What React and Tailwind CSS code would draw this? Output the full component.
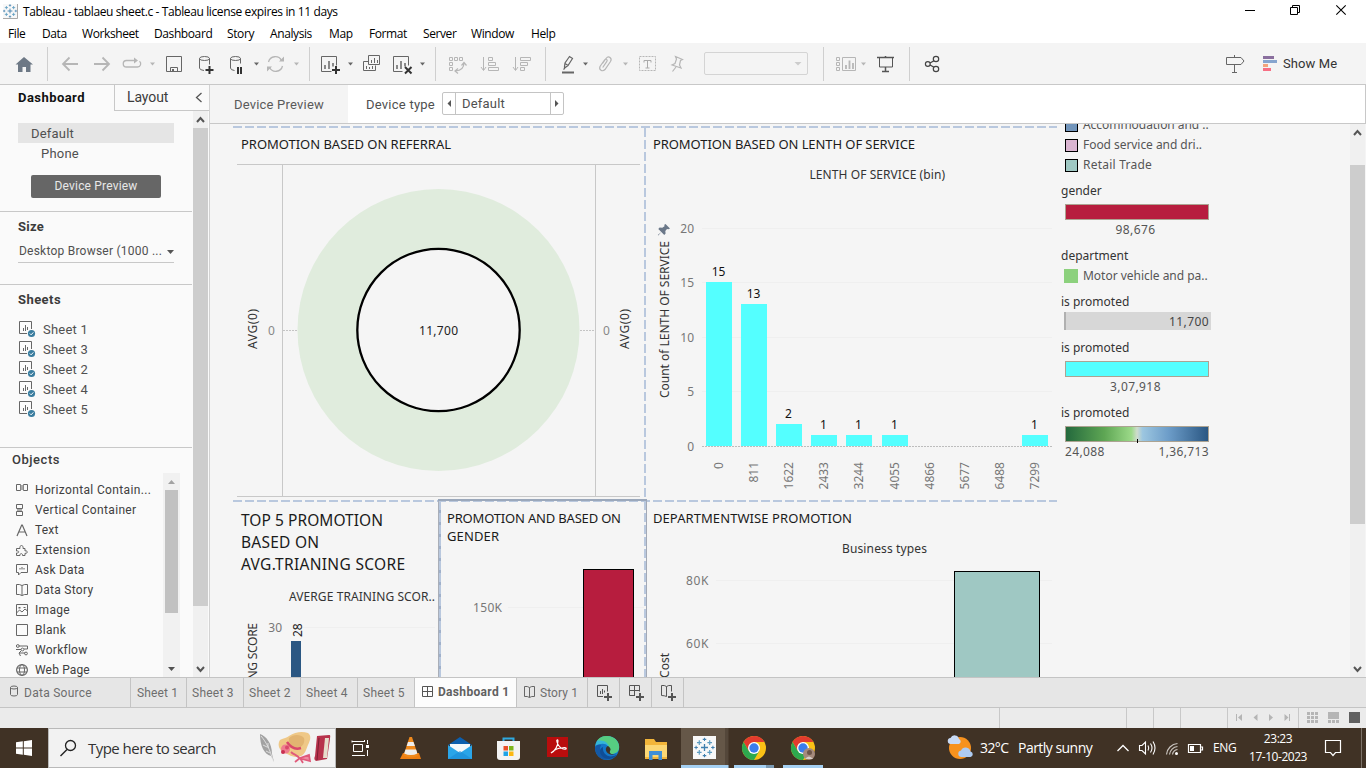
import React from "react";

const WIN = "font-['Open_Sans','Noto_Sans',sans-serif]";
const UI = "font-['Roboto','Noto_Sans',sans-serif]";
const CHART = "font-['Noto_Sans','Open_Sans',sans-serif]";
const DASH_H = "h-[2px] bg-[repeating-linear-gradient(90deg,#b9c8de_0_9px,transparent_9px_12px)]";
const DASH_V = "w-[2px] bg-[repeating-linear-gradient(180deg,#b9c8de_0_9px,transparent_9px_12px)]";

/* Strip of a horizontal bar: x/w is the span it takes, y/h the bar's own range. */
function Slot({ x, w, y, h, className = "", children }) {
  return (
    <svg width={w} height={h} viewBox={`${x} ${y} ${w} ${h}`} className={`shrink-0 ${className}`} fill="none">
      {children}
    </svg>
  );
}

function TableauMark({ cx, cy, s = 1 }) {
  const plus = (x, y, r, c, k) => (
    <path key={`${x},${y}`} d={`M${x - r} ${y}H${x + r}M${x} ${y - r}V${y + r}`} stroke={c} strokeWidth={k} />
  );
  return (
    <g transform={`translate(${cx} ${cy}) scale(${s})`}>
      {plus(0, 0, 2.4, "#3f7fae", 0.9)}
      {plus(-3.6, -3.4, 1.6, "#5b9bc0", 0.8)}
      {plus(3.6, -3.4, 1.6, "#5b9bc0", 0.8)}
      {plus(-3.6, 3.4, 1.6, "#5b9bc0", 0.8)}
      {plus(3.6, 3.4, 1.6, "#5b9bc0", 0.8)}
      {plus(0, -5.6, 1.2, "#3f7fae", 0.7)}
      {plus(0, 5.6, 1.2, "#3f7fae", 0.7)}
      {plus(-5.8, 0, 1.2, "#3f7fae", 0.7)}
      {plus(5.8, 0, 1.2, "#3f7fae", 0.7)}
    </g>
  );
}

function TitleBar() {
  return (
    <div className={`flex h-[24px] items-start bg-white text-black ${WIN}`}>
      <Slot x={0} w={23} y={0} h={24}>
        <rect x="3" y="4" width="15" height="15" fill="#f8f8f8" />
        <path d="M17.5 4V18.5H3" stroke="#a9a9a9" />
        <TableauMark cx={10} cy={11} s={1} />
      </Slot>
      <span className="flex-1 pt-[4px] text-[12px] leading-[16px] tracking-[-0.385px] whitespace-nowrap">
        Tableau - tablaeu sheet.c - Tableau license expires in 11 days
      </span>
      <Slot x={1236} w={130} y={0} h={24}>
        <g stroke="#000" strokeWidth="1">
          <path d="M1245 10.5h10" />
          <path d="M1290.5 7.5h7v7h-7zM1292.5 7.5v-2h7v7h-2" />
          <path d="M1336.300 5.300l9.400 9.400M1345.700 5.300l-9.400 9.400" strokeWidth="1.1" />
        </g>
      </Slot>
    </div>
  );
}

const MENU = [
  ["File", "w-[34px]"], ["Data", "w-[40px]"], ["Worksheet", "w-[72px]"], ["Dashboard", "w-[73px]"],
  ["Story", "w-[43px]"], ["Analysis", "w-[59px]"], ["Map", "w-[40px]"], ["Format", "w-[54px]"],
  ["Server", "w-[48px]"], ["Window", "w-[60px]"], ["Help", "w-[40px]"],
];

function MenuBar() {
  return (
    <div className={`flex h-[19px] bg-white pl-[8px] text-[12px] leading-[20px] tracking-[-0.4px] text-black ${WIN}`}>
      {MENU.map(([t, w]) => (
        <span key={t} className={w}>{t}</span>
      ))}
    </div>
  );
}

const D = "#666";
const G = "#b6b6b6";
const Caret = ({ x, c = D }) => <path d={`M${x - 2.500} 62.500h5l-2.500 3z`} fill={c} />;
const Sep = ({ x }) => <path d={`M${x}.5 47v34`} stroke="#cfcfcf" />;

function Toolbar() {
  const y = 43;
  const h = 41;
  const p = { y, h };
  return (
    <div className={`flex h-[42px] border-b border-[#c8c8c8] bg-[#f4f4f4] ${UI}`}>
      <Slot x={0} w={54} {...p}>
        <path d="M24 57l9 7.500h-2.500v7.500h-4.500v-5h-3.500v5h-4.500v-7.500h-2.500z" fill="#6d7885" />
        <Sep x={47} />
      </Slot>
      <Slot x={54} w={32} {...p}>
        <path d="M78 64H63M69.500 57.500L63 64l6.500 6.500" stroke={G} strokeWidth="1.800" />
      </Slot>
      <Slot x={86} w={32} {...p}>
        <path d="M94 64h15M102.500 57.500L109 64l-6.500 6.500" stroke={G} strokeWidth="1.800" />
      </Slot>
      <Slot x={118} w={42} {...p}>
        <path d="M135.500 60.500h-9a3.200 3.200 0 0 0 0 6.500h11a3.200 3.200 0 0 0 2-5.700" stroke={G} strokeWidth="1.300" />
        <path d="M134 57.500l4 3-4 3z" fill={G} />
        <Caret x={152.500} c={G} />
      </Slot>
      <Slot x={160} w={32} {...p}>
        <path d="M166.500 56.500h15v15h-15zM170.500 71.500v-4h7v4" stroke={D} />
        <path d="M172 69h2v3h-2z" fill={D} />
      </Slot>
      <Slot x={192} w={30} {...p}>
        <path d="M199.500 58.500v9.500q0 2 4.500 2.500M209.500 58.500v6" stroke={D} />
        <ellipse cx="204.500" cy="58.500" rx="5" ry="2" stroke={D} />
        <path d="M205.500 70h8M209.500 66v8" stroke="#333" strokeWidth="2" />
      </Slot>
      <Slot x={222} w={40} {...p}>
        <path d="M230.500 58.500v9.500q0 2 4 2.500M240.500 58.500v5" stroke={D} />
        <ellipse cx="235.500" cy="58.500" rx="5" ry="2" stroke={D} />
        <path d="M238 67v7M241 67v7" stroke="#333" strokeWidth="2" />
        <Caret x={256.500} />
      </Slot>
      <Slot x={262} w={52} {...p}>
        <path d="M268.500 62a7 7 0 0 1 13-1.500M282.500 66a7 7 0 0 1-13 1.500" stroke={G} strokeWidth="1.300" />
        <path d="M279 61.500h5v-5zM272 66.500h-5v5z" fill={G} />
        <Caret x={296.500} c={G} />
        <Sep x={309} />
      </Slot>
      <Slot x={314} w={44} {...p}>
        <path d="M331.500 71.500h-10v-15h15v9" stroke={D} />
        <path d="M325 65v4M329 61v8M333 63v3.500" stroke={D} strokeWidth="1.500" />
        <path d="M332 70h8M336 66v8" stroke="#333" strokeWidth="2" />
        <Caret x={350.500} />
      </Slot>
      <Slot x={358} w={30} {...p}>
        <path d="M368.500 61.500h-5v9h12v-5M368.500 55.500h11v9h-11z" stroke={D} />
        <path d="M366.500 66v3M369.500 67v2M372.500 66v3M371.500 60v3M374.500 58v5M377.500 60v3" stroke={D} />
      </Slot>
      <Slot x={388} w={56} {...p}>
        <path d="M402.500 71.500h-9v-15h15v9" stroke={D} />
        <path d="M397 65v4M401 61v8M405 63v3.500" stroke={D} strokeWidth="1.500" />
        <path d="M405 67l6.500 6.500M411.500 67l-6.500 6.500" stroke="#333" strokeWidth="2" />
        <Caret x={422.500} />
        <Sep x={435} />
      </Slot>
      <Slot x={444} w={30} {...p}>
        <path d="M449.500 57.500h3v3h-3zM454.500 57.500h3v3h-3zM459.500 57.500h3v3h-3zM449.500 62.500h3v3h-3zM449.500 67.500h3v3h-3z" stroke={G} />
        <path d="M464 62.500q0 8-8.500 8.500M461.500 65.500l2.500-3 2.500 3M458 68.500l-3 2.500 3 2.500" stroke={G} strokeWidth="1.200" />
      </Slot>
      <Slot x={474} w={32} {...p}>
        <path d="M483.500 57v13M481 67l2.500 3.500 2.500-3.500M488.500 57.500h4v3h-4zM488.500 62.500h7v3h-7zM488.500 67.500h10v3h-10z" stroke={G} />
      </Slot>
      <Slot x={506} w={46} {...p}>
        <path d="M515.500 57v13M513 67l2.500 3.500 2.500-3.500M520.500 57.500h10v3h-10zM520.500 62.500h7v3h-7zM520.500 67.500h4v3h-4z" stroke={G} />
        <Sep x={545} />
      </Slot>
      <Slot x={552} w={42} {...p}>
        <path d="M564.500 66.500l.5-3.500 4.500-6.500 3 2-4.500 7-3.500 2.500zM565 63.500l3 2M563.500 69.500l1.500-1.500" stroke={D} strokeWidth="1.200" />
        <path d="M562 72.500h12" stroke={D} strokeWidth="2" />
        <Caret x={585.500} />
      </Slot>
      <Slot x={594} w={40} {...p}>
        <path d="M602.500 63.500l3.500-5q2-2.500 4-1t.500 4l-5.500 8q-2 2-4 .8t-1-3.800l4.500-6.500q1.200-1.500 2.200-.6t0 2.300l-4 5.800" stroke={G} strokeWidth="1.200" />
        <Caret x={625.500} c={G} />
      </Slot>
      <Slot x={634} w={30} {...p}>
        <rect x="639.500" y="56.500" width="16" height="14" stroke={G} strokeDasharray="2 1" />
        <path d="M644 62.500v-2h7v2M647.500 60.500v7.500M645.500 68h4" stroke="#aaa" />
      </Slot>
      <Slot x={664} w={40} {...p}>
        <path d="M675.500 56.500l7 3-2 1-1 4.500 1.500 3-9-3 3-1.500 1.500-4.500zM676 67l-3.500 4.500" stroke={G} strokeWidth="1.200" />
      </Slot>
      <div className="mt-[9px] flex h-[23px] w-[104px] shrink-0 items-center justify-end rounded-[2px] border border-[#d4d4d4] pr-[5px]">
        <svg width="8" height="5"><path d="M0.500 1h7l-3.500 3.500z" fill="#ccc" /></svg>
      </div>
      <Slot x={808} w={64} {...p}>
        <Sep x={823} />
        <path d="M836.500 57.500h3v3h-3zM836.500 62.500h3v3h-3zM836.500 67.500h3v3h-3zM842.500 57.500h13v13h-13z" stroke={G} />
        <path d="M846 65v4M849.500 60.500v8.500M853 63v6" stroke={G} strokeWidth="1.800" />
        <Caret x={863.500} c={G} />
      </Slot>
      <Slot x={872} w={44} {...p}>
        <path d="M877 57.500h17M885.500 56v2M885.500 67v5M882 71.500h7" stroke="#555" strokeWidth="1.500" />
        <path d="M879.500 58v9h13v-9" stroke="#555" />
        <Sep x={909} />
      </Slot>
      <Slot x={916} w={34} {...p}>
        <path d="M930 63l4-2.300M930 65l4 2.300" stroke="#444" strokeWidth="1.300" />
        <circle cx="927.800" cy="64" r="2.400" stroke="#444" strokeWidth="1.200" />
        <circle cx="936" cy="59" r="2.700" stroke="#444" strokeWidth="1.200" />
        <circle cx="936" cy="69" r="2.700" stroke="#444" strokeWidth="1.200" />
      </Slot>
      <div className="flex-1" />
      <Slot x={1220} w={63} {...p}>
        <path d="M1226.500 57.500h14.500l3 3.500-3 3.500h-14.500zM1234.500 55v2.500M1234.500 64.500v8M1232 72.500h5" stroke={D} />
        <path d="M1263 56h11v3h-11z" fill="#8a6f9e" />
        <path d="M1263 60h14v3h-14z" fill="#86a5cf" />
        <path d="M1263 64h5v3h-5z" fill="#f2a47c" />
        <path d="M1263 68h8v3h-8z" fill="#f76f84" />
      </Slot>
      <span className="w-[83px] text-[13px] leading-[41px] tracking-[0.100px] text-[#333]">Show Me</span>
    </div>
  );
}

function SheetIcon() {
  return (
    <svg width="17" height="17" viewBox="0 0 17 17" fill="none" className="shrink-0">
      <path d="M8 12.500H0.500v-12h12V8" stroke="#666" />
      <path d="M4.500 7v3M6.500 4v6M8.500 6v3" stroke="#666" />
      <circle cx="12.500" cy="12.500" r="3.600" fill="#3a7d9f" />
      <path d="M10.800 12.500l1.300 1.300 2.200-2.400" stroke="#fff" />
    </svg>
  );
}

const OBJ = [
  ["Horizontal Contain...", "tracking-[0.350px]", <><path d="M.5.500h4v6h-4zM7.500.500h4v6h-4z" stroke="#666" /><path d="M4.500 1h3v5h-3z" fill="#aaa" /></>],
  ["Vertical Container", "tracking-[0.340px]", <><path d="M.5.500h6v4h-6zM.5 7.500h6v4h-6z" stroke="#666" /><path d="M1 5h5v2H1z" fill="#aaa" /></>],
  ["Text", "tracking-[0.200px]", <path d="M1 12L5.700 1h.6L11 12M3 8h6" stroke="#666" strokeWidth="1.200" />],
  ["Extension", "tracking-[0.350px]", <path d="M.5 4.500H4C3 .5 8 .5 7 4.500h2V7c3-1 3 3 0 2.300v2.200H6.500c.5-2.500-3-2.500-2.500 0H.5V9c3 .3 3-2.500 0-2z" stroke="#666" />],
  ["Ask Data", "tracking-[0.200px]", <><path d="M.5.500h11v8H5L2.500 11V8.500h-2z" stroke="#666" /><path d="M3 4h2V3h2v1h2v1.500H3z" fill="#aaa" /></>],
  ["Data Story", "tracking-[0.300px]", <path d="M.5.500q3-.5 5.500 1 2.500-1.500 5.500-1v10q-3-.5-5.500 1-2.500-1.500-5.500-1zM6 1.500v10" stroke="#666" />],
  ["Image", "tracking-[0.300px]", <><path d="M.5.500h11v11H.5zM.5 9l3-3 2.500 2 3-3 2.500 2" stroke="#666" /><path d="M2.500 3h2v1.500h-2zM7.500 3h2v1h-2z" fill="#666" /></>],
  ["Blank", "tracking-[0.300px]", <path d="M.5.500h11v11H.5z" stroke="#666" />],
  ["Workflow", "tracking-[0.250px]", <><path d="M3 2h8.500v3H8M0 5.500h5M3 9h6M5 7l-2 2 1.500 3" stroke="#666" /><circle cx="1.800" cy="2" r="1.400" stroke="#666" /><circle cx="6.500" cy="5.500" r="1.400" stroke="#666" /><circle cx="10" cy="9.500" r="1.400" stroke="#666" /></>],
  ["Web Page", "tracking-[0.150px]", <><circle cx="6" cy="6" r="5.400" stroke="#666" strokeWidth="1.200" /><ellipse cx="6" cy="6" rx="2.500" ry="5.400" stroke="#666" /><path d="M1 4h10M1 8h10" stroke="#666" /></>],
];

function SidePanel() {
  return (
    <div className={`flex h-full w-[210px] shrink-0 flex-col border-r border-[#d2d2d2] bg-[#fafafa] text-[#505050] ${UI}`}>
      <div className="flex h-[26px] shrink-0">
        <div className="w-[114px] pl-[18px] text-[13px] leading-[25px] font-bold tracking-[0.450px] text-[#111]">Dashboard</div>
        <div className="flex flex-1 items-center border-b border-l border-[#c8c8c8] pl-[12px]">
          <span className="w-[68px] text-[14px] leading-[25px] tracking-[-0.100px] text-[#3c3c3c]">Layout</span>
          <svg width="8" height="11" fill="none"><path d="M6.500 1L1.500 5.500l5 4.500" stroke="#555" strokeWidth="1.300" /></svg>
        </div>
      </div>
      <div className="flex min-h-0 flex-1">
        <div className="mr-px flex w-[192px] shrink-0 flex-col overflow-hidden">
          <div className="h-[101px] shrink-0 border-b border-[#c8c8c8] pt-[12px] pl-[18px]">
            <div className="h-[20px] w-[156px] bg-[#e5e5e5] pl-[13px] text-[13px] leading-[21px] tracking-[0.200px]">Default</div>
            <div className="h-[20px] pl-[23px] text-[13px] leading-[22px] tracking-[0.200px]">Phone</div>
            <div className="mt-[12px] ml-[13px] h-[23px] w-[130px] rounded-[2px] bg-[#666] text-center text-[12px] leading-[22px] tracking-[0.180px] text-[#e8e8e8]">
              Device Preview
            </div>
          </div>
          <div className="h-[73px] shrink-0 border-b border-[#c8c8c8] pt-[4px] pl-[18px]">
            <div className="h-[22px] text-[13px] leading-[22px] font-bold tracking-[0.260px] text-[#3c3c3c]">Size</div>
            <div className="mt-[3px] flex h-[22px] w-[156px] items-center justify-between border-b border-[#c8c8c8] pl-px text-[12px] leading-[20px] tracking-[0.230px] whitespace-nowrap">
              <span className="pb-px">Desktop Browser (1000 ...</span>
              <svg width="7" height="4"><path d="M0 0h7L3.500 4z" fill="#555" /></svg>
            </div>
          </div>
          <div className="h-[163px] shrink-0 border-b border-[#c8c8c8] pt-[4px] pl-[18px]">
            <div className="mb-[8px] h-[22px] text-[13px] leading-[22px] font-bold tracking-[0.430px] text-[#3c3c3c]">Sheets</div>
            {[1, 3, 2, 4, 5].map((n) => (
              <div key={n} className="flex h-[20px] items-center gap-[7px] pl-px text-[13px] tracking-[0.220px]">
                <SheetIcon />
                <span className="pt-[2px]">Sheet {n}</span>
              </div>
            ))}
          </div>
          <div className="flex min-h-0 flex-1 flex-col pl-[12px]">
            <div className="h-[25px] shrink-0 text-[13px] leading-[23px] font-medium tracking-[0.530px] text-[#3c3c3c]">Objects</div>
            <div className="flex min-h-0 flex-1">
              <div className="w-[151px] overflow-hidden pt-[7px] pl-[4px]">
                {OBJ.map(([t, k, ic]) => (
                  <div key={t} className={`flex h-[20px] items-center gap-[7px] text-[12px] whitespace-nowrap text-[#404040] ${k}`}>
                    <svg width="12" height="12" viewBox="0 0 12 12" fill="none" className="shrink-0 overflow-visible">{ic}</svg>
                    {t}
                  </div>
                ))}
              </div>
              <div className="flex w-[17px] flex-col items-center bg-[#f1f1f1]">
                <svg width="7" height="4" className="mt-[7px] mb-[6px] shrink-0"><path d="M0 4h7L3.500 0z" fill="#a3a3a3" /></svg>
                <div className="h-[123px] w-[13px] shrink-0 bg-[#c1c1c1]" />
                <div className="flex-1" />
                <svg width="7" height="4" className="mb-[6px] shrink-0"><path d="M0 0h7L3.500 4z" fill="#505050" /></svg>
              </div>
            </div>
          </div>
        </div>
        <div className="flex w-[15px] flex-col items-center bg-[#f0f0f0]">
          <svg width="15" height="17" fill="none"><path d="M4 11l3.500-4 3.500 4" stroke="#555" strokeWidth="2" /></svg>
          <div className="h-[478px] w-full bg-[#cdcdcd]" />
          <div className="flex-1" />
          <svg width="15" height="17" fill="none"><path d="M4 7l3.500 4L11 7" stroke="#555" strokeWidth="2" /></svg>
        </div>
      </div>
    </div>
  );
}

function DeviceBar() {
  return (
    <div className={`flex h-[39px] shrink-0 border-b border-[#c8c8c8] bg-white text-[13px] leading-[39px] text-[#505050] ${UI}`}>
      <div className="w-[138px] bg-[#f4f4f4] pl-[24px] tracking-[0.200px] text-[#5a5a5a]">Device Preview</div>
      <div className="w-[94px] pl-[18px] tracking-[0.240px]">Device type</div>
      <div className="mt-[7px] flex h-[23px] w-[122px] items-center rounded-[2px] border border-[#c4c4c4]">
        <svg width="12" height="21"><path d="M8 7v7l-3.500-3.500z" fill="#555" /></svg>
        <div className="h-full flex-1 border-x border-[#c4c4c4] pl-[6px] leading-[21px] tracking-[0.200px]">Default</div>
        <svg width="12" height="21"><path d="M4 7v7l3.500-3.500z" fill="#555" /></svg>
      </div>
      <div className="flex-1" />
      <div className="w-px bg-[#c8c8c8]" />
    </div>
  );
}

function Txt({ x, y, w, c = "#333", s = 12, a, children }) {
  return (
    <text x={x} y={y} fontSize={s} fill={c} textAnchor={a} textLength={w} lengthAdjust="spacing">{children}</text>
  );
}
function VTxt({ x, y, w, c = "#333", s = 12, a, children }) {
  return (
    <text transform={`translate(${x} ${y}) rotate(-90)`} fontSize={s} fill={c} textAnchor={a} textLength={w}>{children}</text>
  );
}

/* A worksheet on the dashboard; its viewBox is in window coordinates. */
function Sheet({ x, y, w, h, children }) {
  return (
    <svg width={w} height={h} viewBox={`${x} ${y} ${w} ${h}`} className={`shrink-0 ${CHART}`} fill="none">
      {children}
    </svg>
  );
}

function ReferralChart() {
  return (
    <Sheet x={233} y={128} w={411} h={372}>
      <Txt x={241} y={149} s={13} w={210} c="#1b1b1b">PROMOTION BASED ON REFERRAL</Txt>
      <path d="M237 164.500h403M237 496.500h403M282.500 164v332M595.500 164v332" stroke="#c8c8c8" />
      <path d="M283 330.500h312" stroke="#c4c4c4" strokeDasharray="2 1" />
      <circle cx="438.500" cy="330" r="141" fill="#e0ecdd" />
      <circle cx="438.500" cy="330" r="81.200" fill="#f5f5f5" stroke="#000" strokeWidth="2.300" />
      <Txt x={438.5} y={335} w={39} a="middle" c="#222">11,700</Txt>
      <Txt x={268} y={335} c="#888">0</Txt>
      <Txt x={603} y={335} c="#888">0</Txt>
      <VTxt x={257} y={349} w={40}>AVG(0)</VTxt>
      <VTxt x={629} y={349} w={40}>AVG(0)</VTxt>
    </Sheet>
  );
}

const BINS = [
  [706, 282, "0", "15"], [741, 304, "811", "13"], [776, 424, "1622", "2"], [811, 435, "2433", "1"], [846, 435, "3244", "1"],
  [882, 435, "4055", "1"], [917, 446, "4866"], [952, 446, "5677"], [987, 446, "6488"], [1022, 435, "7299", "1"],
];

function ServiceChart() {
  return (
    <Sheet x={646} y={128} w={411} h={372}>
      <Txt x={653} y={149} s={13} w={262} c="#1b1b1b">PROMOTION BASED ON LENTH OF SERVICE</Txt>
      <Txt x={809.5} y={179} w={135.5}>LENTH OF SERVICE (bin)</Txt>
      <path d="M702 228.500h350M702 282.500h350M702 337.500h350M702 391.500h350" stroke="#efefef" />
      {[["20", 233], ["15", 287], ["10", 342], ["5", 396], ["0", 451]].map(([t, y]) => (
        <Txt key={t} x={694} y={y} a="end" c="#777">{t}</Txt>
      ))}
      {BINS.map(([x, y, bin, n]) => (
        <g key={bin}>
          <rect x={x} y={y} width="26" height={446 - y} fill="#54ffff" />
          {n && <Txt x={x + 12.5} y={y - 6} a="middle" c="#111">{n}</Txt>}
          <VTxt x={x + 16.5} y={462} a="end" c="#777">{bin}</VTxt>
        </g>
      ))}
      <path d="M702 446.500h350" stroke="#bdbdbd" strokeDasharray="2 1" />
      <VTxt x={669} y={398} w={157}>Count of LENTH OF SERVICE</VTxt>
      <path d="M665.500 224l4.500 4.500-1.500.8-1.500-.3-1.700 2 .3 2.500-1.300 1.500-3-3-3 3.500-.5-.5 3.500-3-3-3 1.300-1.500 2.700.3 2.200-1.500-.2-1.500z" fill="#6b7889" />
    </Sheet>
  );
}

function TrainingChart() {
  return (
    <Sheet x={233} y={502} w={205} h={175}>
      <Txt x={241} y={526} s={15.5} w={142} c="#1b1b1b">TOP 5 PROMOTION</Txt>
      <Txt x={241} y={548} s={15.5} w={78} c="#1b1b1b">BASED ON</Txt>
      <Txt x={241} y={570} s={15.5} w={164} c="#1b1b1b">AVG.TRIANING SCORE</Txt>
      <Txt x={289} y={601} w={146}>AVERGE TRAINING SCOR..</Txt>
      <path d="M303 627.500h132" stroke="#efefef" />
      <Txt x={282} y={632} a="end" c="#777">30</Txt>
      <rect x="291" y="641" width="10" height="36" fill="#2b5783" />
      <VTxt x={301.5} y={637} c="#222">28</VTxt>
      <VTxt x={257} y={623} w={139} a="end">AVERGE TRAINING SCORE</VTxt>
    </Sheet>
  );
}

function GenderChart() {
  return (
    <div className="flex h-[178px] w-[209px] shrink-0 flex-col border-t-2 border-[#9ba8bb]">
      <div className="flex">
        <div className="h-[176px] w-px bg-[#a9aeb8]" />
        <div className={`h-[176px] bg-[#9fb0ca] ${DASH_V}`} />
        <Sheet x={441} y={501} w={203} h={176}>
          <Txt x={447} y={523} s={13} w={174} c="#1b1b1b">PROMOTION AND BASED ON</Txt>
          <Txt x={447} y={541} s={13} w={52} c="#1b1b1b">GENDER</Txt>
          <path d="M508 607.500h136" stroke="#efefef" />
          <Txt x={473} y={612} w={29} c="#777">150K</Txt>
          <rect x="583.500" y="569.500" width="50" height="120" fill="#b71d3e" stroke="#000" />
        </Sheet>
        <div className={`h-[176px] ${DASH_V}`} />
        <div className="h-[176px] w-px bg-[#a3a9b5]" />
      </div>
    </div>
  );
}

function DepartmentChart() {
  return (
    <Sheet x={647} y={502} w={410} h={175}>
      <Txt x={653} y={523} s={13} w={199} c="#1b1b1b">DEPARTMENTWISE PROMOTION</Txt>
      <Txt x={842} y={553} w={85}>Business types</Txt>
      <path d="M716 580.500h336M716 643.500h336" stroke="#efefef" />
      <Txt x={686} y={585} w={22.5} c="#777">80K</Txt>
      <Txt x={686} y={648} w={22.5} c="#777">60K</Txt>
      <rect x="954.500" y="571.500" width="85" height="120" fill="#9fc8c3" stroke="#000" />
      <VTxt x={669} y={653} a="end">Average of Training Cost</VTxt>
    </Sheet>
  );
}

const Swatch = ({ c }) => <span className={`mr-[5px] ml-[4px] h-[13px] w-[13px] border border-black ${c}`} />;
const Head = ({ c = "", children }) => <div className={`h-[18px] leading-[18px] text-[#333] ${c}`}>{children}</div>;

function Legends() {
  return (
    <div className={`flex w-[293px] flex-col pl-[4px] text-[12px] text-[#555] ${CHART}`}>
      <div className="-mt-[9px] flex h-[20px] items-center tracking-[-0.050px]"><Swatch c="bg-[#7295bb]" />Accommodation and ..</div>
      <div className="flex h-[20px] items-center tracking-[-0.050px]"><Swatch c="bg-[#dab5d1]" />Food service and dri..</div>
      <div className="flex h-[20px] items-center tracking-[0.230px]"><Swatch c="bg-[#9fc8c3]" />Retail Trade</div>
      <Head c="mt-[7px]">gender</Head>
      <div className="mt-[4px] ml-[4px] h-[16px] w-[144px] border border-[#aca392] bg-[#b71d3e]" />
      <div className="ml-[4px] h-[20px] w-[141px] text-center leading-[20px] tracking-[0.400px]">98,676</div>
      <Head c="mt-[7px]">department</Head>
      <div className="mt-[1px] flex h-[20px] items-center tracking-[-0.020px]"><span className="mr-[5px] ml-[3px] size-[14px] bg-[#8cd17d]" />Motor vehicle and pa..</div>
      <Head c="mt-[7px]">is promoted</Head>
      <div className="mt-[1px] ml-[3px] h-[18px] w-[147px] border-l-2 border-[#b0b0b0] bg-[#d7d7d7] pr-[2px] text-right leading-[19px] tracking-[0.400px] text-[#444]">11,700</div>
      <Head c="mt-[9px]">is promoted</Head>
      <div className="mt-[4px] ml-[4px] h-[16px] w-[144px] border border-[#aca392] bg-[#54ffff]" />
      <div className="ml-[4px] h-[20px] w-[141px] text-center leading-[20px] tracking-[0.400px]">3,07,918</div>
      <Head c="mt-[7px]">is promoted</Head>
      <div className="mt-[4px] ml-[4px] flex h-[16px] w-[144px] items-end justify-center border border-[#aca392] bg-[linear-gradient(90deg,#24693d_0%,#5ea654_27%,#9bd988_46%,#cfdccc_50%,#9cc6e0_54%,#6d9dc9_72%,#2a5783_100%)]">
        <span className="-mb-[2px] ml-px h-[4px] w-px bg-black" />
      </div>
      <div className="ml-[4px] flex h-[20px] w-[144px] justify-between leading-[19px] tracking-[0.350px]"><span>24,088</span><span>1,36,713</span></div>
    </div>
  );
}

function Canvas() {
  return (
    <div className="flex h-[553px] overflow-hidden bg-[#f5f5f5]">
      <div className="ml-[23px] flex w-[824px] shrink-0 flex-col pt-[2px]">
        <div className={DASH_H} />
        <div className="flex h-[372px]">
          <ReferralChart />
          <div className={`h-[372px] ${DASH_V}`} />
          <ServiceChart />
        </div>
        <div className={DASH_H} />
        <div className="flex h-[175px] items-end">
          <TrainingChart />
          <GenderChart />
          <DepartmentChart />
        </div>
      </div>
      <Legends />
      <div className="flex w-[15px] shrink-0 flex-col bg-[#f0f0f0]">
        <svg width="15" height="17" fill="none"><path d="M4 11l3.500-4 3.500 4" stroke="#555" strokeWidth="2" /></svg>
        <div className="mt-[24px] h-[359px] bg-[#cdcdcd]" />
        <div className="flex-1" />
        <svg width="15" height="17" fill="none"><path d="M4 7l3.500 4L11 7" stroke="#555" strokeWidth="2" /></svg>
      </div>
    </div>
  );
}

const Plus = () => <path d="M7 12h8M11 8v8" stroke="#555" strokeWidth="2" />;
const TAB = "flex h-full items-center border-r border-[#c4c4c4]";

function SheetTabs() {
  return (
    <div className={`flex h-[31px] border-y border-[#c4c4c4] bg-[#e6e6e6] text-[12px] whitespace-nowrap text-[#6e6e6e] ${UI}`}>
      <div className={`${TAB} w-[131px] gap-[6px] pl-[10px] tracking-[0.270px]`}>
        <svg width="8" height="12" fill="none" className="mb-[3px]"><path d="M.5 2.500v7q0 1.500 3.500 1.500t3.500-1.500v-7M.5 2.500q0 1.500 3.500 1.500T7.500 2.500 4 1 .5 2.500z" stroke="#666" /></svg>
        Data Source
      </div>
      <div className={`${TAB} w-[56px] pl-[6px] tracking-[0.130px]`}>Sheet 1</div>
      <div className={`${TAB} w-[57px] pl-[5px] tracking-[0.250px]`}>Sheet 3</div>
      <div className={`${TAB} w-[57px] pl-[5px] tracking-[0.250px]`}>Sheet 2</div>
      <div className={`${TAB} w-[57px] pl-[5px] tracking-[0.250px]`}>Sheet 4</div>
      <div className={`${TAB} w-[57px] pl-[5px] tracking-[0.250px]`}>Sheet 5</div>
      <div className={`${TAB} w-[102px] gap-[5px] bg-[#fcfcfc] pl-[7px] pb-[2px] font-bold tracking-[0.320px] text-[#606060]`}>
        <svg width="11" height="11" fill="none"><path d="M.5.500h10v10H.5zM5.500.500v10M.5 5.500h10" stroke="#555" /></svg>
        Dashboard 1
      </div>
      <div className={`${TAB} w-[71px] gap-[4px] pl-[7px] tracking-[0.090px]`}>
        <svg width="12" height="13" fill="none"><path d="M.5.500q3-.5 5 1 2-1.500 5-1v10q-3-.5-5 1-2-1.500-5-1zM5.500 1.500v10" stroke="#666" /></svg>
        Story 1
      </div>
      <div className={`${TAB} w-[32px] pt-px pl-[9px]`}>
        <svg width="17" height="17" fill="none"><path d="M6 11.500H.5v-11h10v6M3.500 6v3M5.500 4v5M7.500 5.500v2" stroke="#555" /><Plus /></svg>
      </div>
      <div className={`${TAB} w-[32px] pt-px pl-[9px]`}>
        <svg width="17" height="17" fill="none"><path d="M6 10.500H.5V.500h10v6M5.500.500v10M.5 5.500h10" stroke="#555" /><Plus /></svg>
      </div>
      <div className={`${TAB} w-[32px] pt-px pl-[9px]`}>
        <svg width="17" height="17" fill="none"><path d="M5.500 11.500q-2-1-5-1V.500q3-.5 5 1 2-1.500 5-1v6M5.500 1.500v10" stroke="#555" /><Plus /></svg>
      </div>
    </div>
  );
}

function StatusBar() {
  return (
    <div className="flex h-[20px] justify-end bg-[#ebebeb]">
      <Slot x={996} w={370} y={708} h={20}>
        <path d="M999.500 708v20M1126.500 708v20M1153.500 708v20M1180.500 708v20M1227.500 708v20M1298.500 708v20" stroke="#c8c8c8" />
        <path d="M1236.500 714v7M1289.500 714v7" stroke="#b5b5b5" />
        <path d="M1242 714v7l-4-3.500zM1257.500 714v7l-4-3.500zM1269 714v7l4-3.500zM1284.500 714v7l4-3.500z" fill="#b5b5b5" />
        {[1307, 1311, 1315].map((x) => [712, 716, 720].map((y) => <rect key={`${x}-${y}`} x={x} y={y} width="3" height="3" fill="#b5b5b5" />))}
        <path d="M1328 712h11v7h-11zM1328 720h3v3h-3zM1332 720h3v3h-3zM1336 720h3v3h-3z" fill="#b5b5b5" />
        <rect x="1349" y="712" width="11" height="11" fill="#606060" />
      </Slot>
    </div>
  );
}

function Chrome({ cx, cy }) {
  return (
    <g transform={`translate(${cx} ${cy})`}>
      <circle r="12" fill="#fbc116" />
      <path d="M0-6h10.400A12 12 0 0 0-10.400-6L-5.200 3z" fill="#e33b2e" />
      <path d="M-10.400-6A12 12 0 0 0 0 12L5.200 3-5.200 3z" fill="#2da94f" />
      <circle r="6" fill="#fff" />
      <circle r="4.700" fill="#3b7ded" />
    </g>
  );
}

function Taskbar() {
  const p = { y: 728, h: 40 };
  return (
    <div className={`flex h-[40px] bg-[#403225] text-white ${WIN}`}>
      <Slot x={0} w={48} {...p}>
        <path d="M16 742.300l6.800-1v6.300H16zM23.800 741.200l8.200-1.200v7.600h-8.200zM16 748.500h6.800v6.300l-6.800-1zM23.800 748.500H32v7.500l-8.200-1.200z" fill="#fff" />
      </Slot>
      <div className="flex w-[288px] shrink-0 border border-[#b9b9b9] bg-[#f2f2f2]">
        <Slot x={49} w={39} y={729} h={38}>
          <circle cx="70.500" cy="745.500" r="5" stroke="#222" strokeWidth="1.300" />
          <path d="M67 749.500l-6.500 6.500" stroke="#222" strokeWidth="1.400" />
        </Slot>
        <span className="w-[169px] text-[15px] leading-[38px] tracking-[-0.530px] text-[#333]">Type here to search</span>
        <Slot x={257} w={78} y={729} h={38}>
          <path d="M260 734c6 2 12 9 12 20l2 8-3-6c-7-2-11-10-11-22z" fill="#a2a2a2" />
          <path d="M261 736c5 6 9 13 12 25M263 745l4 2M266 751l4 2M268 743l0 5" stroke="#ececec" strokeWidth=".8" />
          <path d="M279 742c1-4 6-3 10-6 6-4 13-5 19-3 4 3 2 8 0 12-2 5-3 9-7 11-8 3-13-2-19-5-3-2-4-6-3-9z" fill="#efc887" />
          <path d="M289 738c4-4 12-4 15 0 1 4-1 9-6 10-6 0-10-5-9-10z" fill="#e2b471" />
          <path d="M287 742c4 6 8 8 14 6" stroke="#d9486a" strokeWidth="2.500" />
          <circle cx="285.500" cy="749" r="4.500" fill="#ef7d8f" /><circle cx="287" cy="747.500" r="2" fill="#d9486a" /><circle cx="283" cy="752" r="2" fill="#c92f51" />
          <path d="M291 752c3 3 7 3 9 7M300 758l-5 4M300 758l9-3 1 6-8-2zM300 758l3 5" stroke="#e05a7a" strokeWidth="1.800" fill="#f08ba0" />
          <path d="M317 736l12-1c2 0 1 2 1 4l-3 20-11 2c-2-1-2-3-1-5z" fill="#b7324c" />
          <path d="M325 738l4 0-2 20-4 0z" fill="#e6dccb" /><path d="M319 738l-2 22" stroke="#7e1f33" />
        </Slot>
      </div>
      <Slot x={336} w={50} {...p}>
        <path d="M353.500 744.500h9v7h-9zM352 742.500v-2M364.500 740v2M352 741.500h13M352 755.500h13M367.500 740v4M367.500 750v6" stroke="#fff" />
        <path d="M366 745h3v3h-3z" fill="#fff" />
      </Slot>
      <Slot x={386} w={49} {...p}>
        <path d="M403 753h16l2 6h-21z" fill="#ef7f12" />
        <path d="M409.500 737h2.500l6 18.500q-7 4-14.500 0z" fill="#f08a1d" />
        <path d="M408 742h5.500l1.400 4h-8.200zM405.500 749.500h10.600l1.300 4q-6.500 3-13.200 0z" fill="#eee" />
      </Slot>
      <Slot x={435} w={49} {...p}>
        <path d="M448 745l12-8 12 8z" fill="#0c5fae" />
        <path d="M450 744h20v9h-20z" fill="#f4f8fb" />
        <path d="M448 745l12 8 12-8v14h-24z" fill="#2aa5e8" />
        <path d="M448 759l12-8 12 8z" fill="#1d8fd8" opacity=".7" />
      </Slot>
      <Slot x={484} w={49} {...p}>
        <path d="M503.500 742v-3.500h10V742" stroke="#2ea9e0" strokeWidth="2" />
        <path d="M497 741h23v16q0 3-3 3h-17q-3 0-3-3z" fill="#f3f3f3" />
        <path d="M503.500 746h4.500v4.500h-4.500z" fill="#e94f26" /><path d="M509 746h4.500v4.500H509z" fill="#7db61c" />
        <path d="M503.500 751.500h4.500v4.500h-4.500z" fill="#1fa3e6" /><path d="M509 751.500h4.500v4.500H509z" fill="#fcb813" />
      </Slot>
      <Slot x={533} w={49} {...p}>
        <rect x="547" y="737" width="21" height="20" fill="#b90d0d" />
        <path d="M551 753c4-2 7-7 7-12 0-2-2-1-1 1 1 4 5 8 9 7 1-1-1-2-4-1-4 0-8 2-11 5z" stroke="#fff" strokeWidth="1.100" />
      </Slot>
      <Slot x={582} w={49} {...p}>
        <circle cx="607" cy="748" r="12" fill="#1477c8" />
        <path d="M595.200 746c1-7 6-10 12-10 7 0 12 5 12 11 0 5-4 7-8 7-3 0-4-1-3-3 2-4-2-8-7-7-3 0-5 1-6 2z" fill="#35b5d8" />
        <path d="M607 736c7 0 12 5 12 11 0 5-4 7-8 7-2 0-3-1-3-2 4-8-4-13-11-11 2-3 5-5 10-5z" fill="#5fd36b" opacity=".8" />
        <path d="M601 745c-3 6 1 13 9 14-8 3-15-4-15-11 0-2 3-4 6-3z" fill="#1458a5" />
        <path d="M603 747c-1 7 6 12 13 8 1 0 1 0 0 1-6 6-16 2-16-5 0-2 1-3 3-4z" fill="#0f4d96" />
        <path d="M608 746c-3 1-3 6 1 8 2 1 5 1 7 0-5 1-7-1-6-3 1-1 1-3-2-5z" fill="#403225" />
      </Slot>
      <Slot x={631} w={50} {...p}>
        <path d="M645 739h9l2 3h11v17h-22z" fill="#f2b53a" />
        <path d="M645 745h22v12h-22z" fill="#fbd775" />
        <path d="M649 760v-9h13v9h-3.500v-5h-6v5z" fill="#3f8fd8" />
      </Slot>
      <Slot x={681} w={48} {...p}>
        <rect x="681" y="728" width="44" height="40" fill="#655748" /><rect x="725" y="728" width="3.500" height="40" fill="#54473a" />
        <rect x="681" y="765" width="47.500" height="3" fill="#a5d0f2" />
        <rect x="693" y="736" width="23" height="23" fill="#f8f8f8" />
        <TableauMark cx={704.500} cy={747.500} s={1.450} />
      </Slot>
      <Slot x={729} w={48} {...p}>
        <Chrome cx={754} cy={748} />
        <rect x="734" y="765" width="32" height="3" fill="#a5d0f2" /><rect x="766" y="765" width="8" height="3" fill="#7b9ab3" />
      </Slot>
      <Slot x={777} w={50} {...p}>
        <Chrome cx={803} cy={748} />
        <circle cx="809" cy="754" r="6" fill="#a58a7c" /><circle cx="809.500" cy="752.500" r="2.500" fill="#6d564b" /><path d="M805 759q4-5 8 0z" fill="#d7cfc9" />
        <rect x="783" y="765" width="40" height="3" fill="#a5d0f2" />
      </Slot>
      <div className="flex-1" />
      <Slot x={940} w={40} {...p}>
        <circle cx="960" cy="748" r="11" fill="#f7921e" />
        <path d="M951 744a3 3 0 0 1-.5-6 4.500 4.500 0 0 1 8.500 1 2.700 2.700 0 0 1 0 5z" fill="#c7daf5" />
        <path d="M961 757a3.300 3.300 0 0 1 0-6.500 5 5 0 0 1 9.500 1 2.800 2.800 0 0 1 0 5.500z" fill="#aecbf2" />
      </Slot>
      <span className="w-[38px] text-[14px] leading-[40px] tracking-[-0.600px]">32°C</span>
      <span className="w-[92px] text-[14px] leading-[40px] tracking-[-0.530px] whitespace-nowrap">Partly sunny</span>
      <Slot x={1110} w={103} {...p}>
        <path d="M1117.500 751l5.500-5.500 5.500 5.500" stroke="#fff" strokeWidth="1.300" />
        <path d="M1139.500 745.500h2.500l3.500-3.500v12l-3.500-3.500h-2.500zM1148 745.500q1.500 2.500 0 5M1150.500 743.500q3 4.500 0 9M1153 741.500q4 6.500 0 13" stroke="#fff" strokeWidth="1.100" />
        <path d="M1166.500 754.500a12 12 0 0 1 11-11M1169.500 754.500a9 9 0 0 1 8-8M1172.500 754.500a6 6 0 0 1 5-5" stroke="#c9c4bf" strokeWidth="1.200" />
        <circle cx="1176.500" cy="753.500" r="1.500" fill="#fff" />
        <path d="M1188.500 744.500h12v8h-12zM1201 747h1.500v3h-1.500" stroke="#fff" strokeWidth="1.200" />
        <path d="M1190 746h4v5h-4z" fill="#fff" />
      </Slot>
      <span className="w-[32px] text-[12px] leading-[40px] tracking-[-0.400px]">ENG</span>
      <div className="w-[66px] text-center text-[12px] leading-[18px] tracking-[-0.460px] whitespace-nowrap">
        <div className="pt-[2px]">23:23</div>
        <div>17-10-2023</div>
      </div>
      <Slot x={1311} w={55} {...p}>
        <path d="M1325.500 740.500h15v12h-5l-2.500 3-2.500-3h-5z" stroke="#fff" strokeWidth="1.200" />
        <path d="M1361.500 728v40" stroke="#7c7268" />
      </Slot>
    </div>
  );
}

export default function App() {
  return (
    <div className="flex h-[768px] w-[1366px] flex-col overflow-hidden bg-white">
      <TitleBar />
      <MenuBar />
      <Toolbar />
      <div className="flex h-[592px] shrink-0">
        <SidePanel />
        <div className="flex w-[1156px] flex-col">
          <DeviceBar />
          <Canvas />
        </div>
      </div>
      <SheetTabs />
      <StatusBar />
      <Taskbar />
    </div>
  );
}
